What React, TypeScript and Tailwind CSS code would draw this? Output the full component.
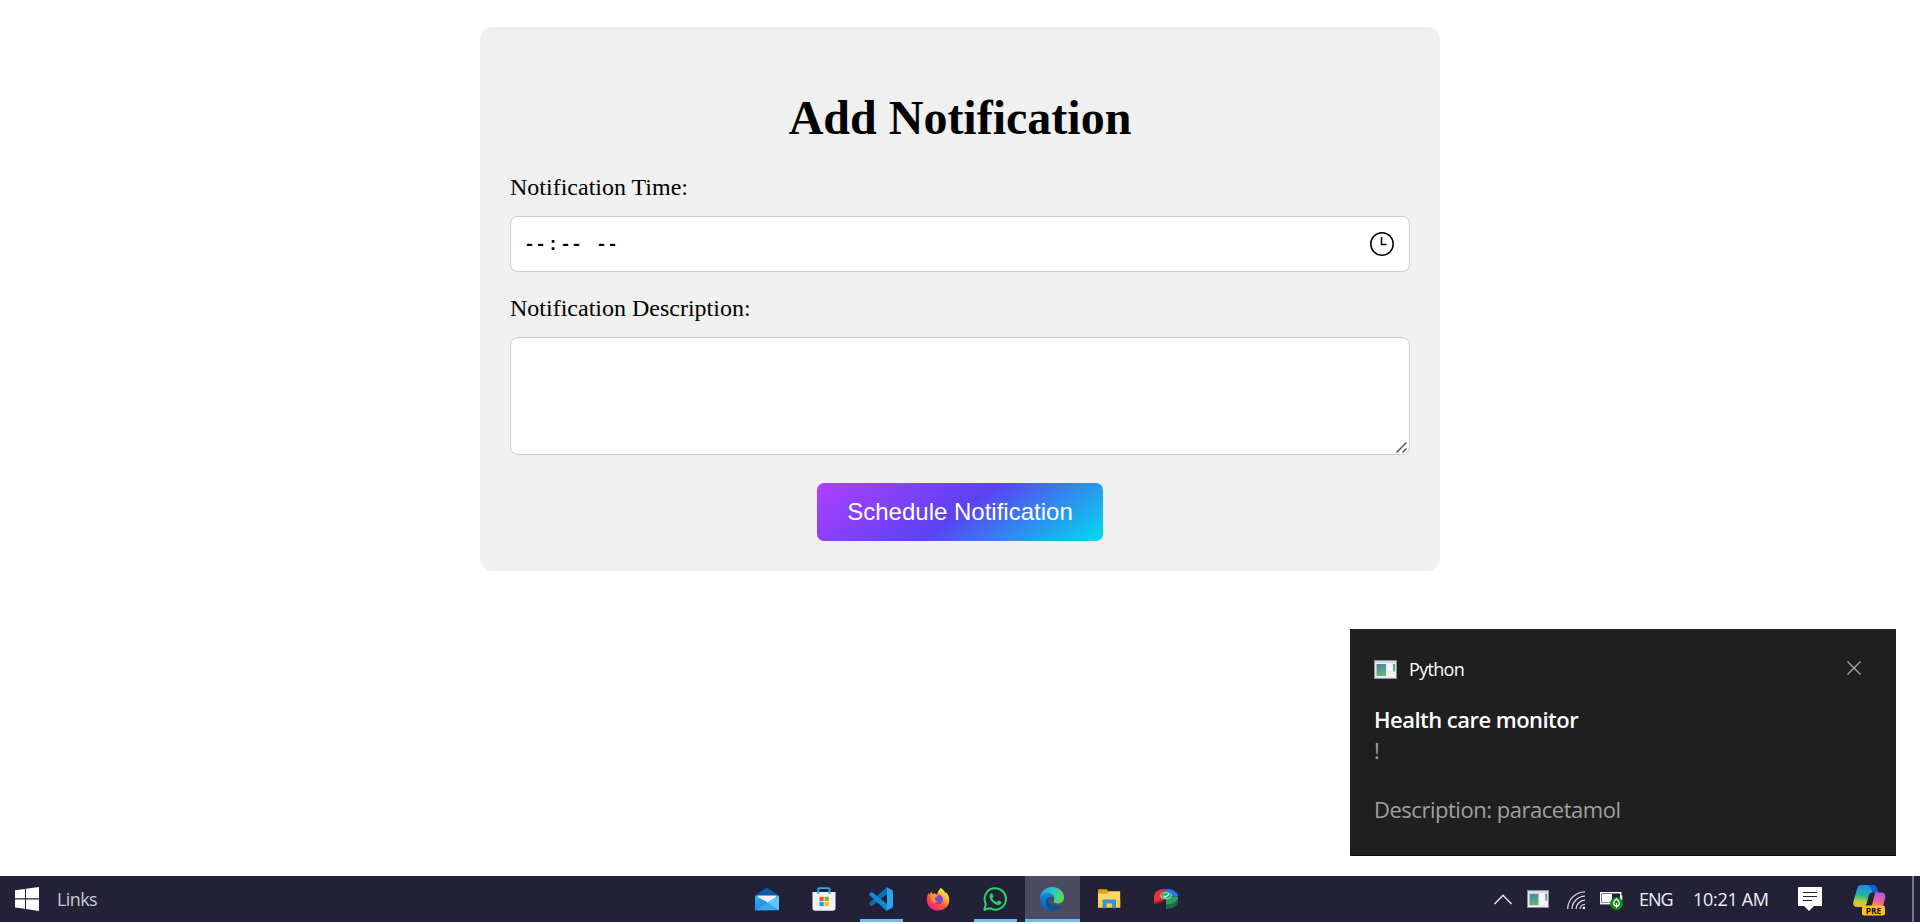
import type { ReactNode } from "react";

const UI = "font-['Open_Sans','Noto_Sans',sans-serif]";

function ClockIcon() {
  return (
    <svg width="24" height="24" viewBox="0 0 24 24" fill="none" stroke="#000" strokeWidth="1.5">
      <circle cx="12" cy="12" r="11.2" />
      <path d="M11.5 5v7.5h5" />
    </svg>
  );
}

function PythonIcon({ className }: { className: string }) {
  return (
    <svg viewBox="0 0 22 19" className={className} preserveAspectRatio="none">
      <defs>
        <linearGradient id="pyWin" x1="0" y1="0" x2="0.3" y2="1">
          <stop offset="0" stopColor="#4a7fa5" />
          <stop offset="1" stopColor="#66b37a" />
        </linearGradient>
      </defs>
      <rect x="0.5" y="0.5" width="21" height="18" fill="#e9ecee" stroke="#8b9296" />
      <rect x="1" y="1" width="20" height="2" fill="#d5dade" />
      <rect x="2.5" y="4" width="9" height="12" fill="url(#pyWin)" />
      <rect x="13" y="4" width="4.5" height="7" fill="#f8f8f8" />
      <rect x="13" y="12" width="7" height="4" fill="#f6f6f6" />
      <rect x="18.4" y="4" width="1.8" height="7.5" fill="url(#pyWin)" />
    </svg>
  );
}

function WindowsLogo() {
  return (
    <svg width="24" height="24" viewBox="0 0 24 24" fill="#fff">
      <path d="M0 3.3 10 2v9.3H0zM11 1.8 24 0v11.3H11zM0 12.4h10v9.4L0 20.5zM11 12.4h13V24l-13-1.9z" />
    </svg>
  );
}

function MailIcon() {
  return (
    <svg width="24" height="24" viewBox="0 0 24 24">
      <defs>
        <linearGradient id="mailBody" x1="0" y1="0" x2="0.4" y2="1">
          <stop offset="0" stopColor="#35b9f5" />
          <stop offset="1" stopColor="#1a86dd" />
        </linearGradient>
      </defs>
      <path d="M0 8.5 10.7 1.3a2.2 2.2 0 0 1 2.6 0L24 8.500V14H0z" fill="#0a5cab" />
      <path d="M2 8.500h20l-5 9H7z" fill="#f4f1f1" />
      <path d="M0 8.500 12 15v8.200H0z" fill="url(#mailBody)" />
      <path d="M0 23.200 24 8.500v14.700z" fill="#35a9ee" />
      <path d="M24 8.500 12 15.200 24 23.200z" fill="#58c8f6" />
    </svg>
  );
}

function StoreIcon() {
  return (
    <svg width="24" height="24" viewBox="0 0 24 24">
      <path d="M6.200 6.500V2.400a1.300 1.300 0 0 1 1.300-1.300h8.800a1.300 1.300 0 0 1 1.300 1.300v4.100" fill="none" stroke="#28b2ea" strokeWidth="1.900" />
      <path d="M.5 5h23v16a2.800 2.800 0 0 1-2.800 2.800H3.300A2.800 2.800 0 0 1 .5 21z" fill="#f1f0f2" />
      <path d="M6.200 5V7M17.600 5V7" stroke="#28b2ea" strokeWidth="1.900" />
      <rect x="7.500" y="9.800" width="4.200" height="4.200" fill="#f25022" />
      <rect x="12.600" y="9.800" width="4.200" height="4.200" fill="#7fba00" />
      <rect x="7.500" y="14.900" width="4.200" height="4.200" fill="#00a4ef" />
      <rect x="12.600" y="14.900" width="4.200" height="4.200" fill="#ffb900" />
    </svg>
  );
}

function VsCodeIcon() {
  return (
    <svg width="24" height="24" viewBox="0 0 24 24">
      <path d="M.3 15.900a1 1 0 0 0 0 1.400L2 18.700c.4.300.9.300 1.300 0L18 7V.3c-.4 0-.8.200-1.100.5z" fill="#0b6fb5" />
      <path d="M.3 8.100a1 1 0 0 1 0-1.400L2 5.300c.4-.3.900-.3 1.300 0L18 17v6.700c-.4 0-.8-.2-1.100-.5z" fill="#1489d1" />
      <path d="M17.400.3 23 2.900c.6.300 1 .9 1 1.500v15.200c0 .6-.4 1.200-1 1.500l-5.600 2.600c-.5.200-1 .1-1.400-.3.800.5 2 0 2-1V1.600c0-1-1.200-1.500-2-1 .4-.4.900-.5 1.400-.3z" fill="#28a4f0" />
    </svg>
  );
}

function FirefoxIcon() {
  return (
    <svg width="24" height="24" viewBox="0 0 24 24">
      <defs>
        <linearGradient id="ffBody" x1="0.850" y1="0.100" x2="0.250" y2="0.950">
          <stop offset="0" stopColor="#fff04a" />
          <stop offset="0.350" stopColor="#ffa82c" />
          <stop offset="0.650" stopColor="#ff5038" />
          <stop offset="1" stopColor="#f0208a" />
        </linearGradient>
      </defs>
      <path d="M14.600 1c3.700 2.200 4.400 4.200 4.900 6 .1-1 .1-1.500-.1-2.200 2.500 2.200 3.900 5.200 3.900 8.300C23.300 19.300 18.300 23.500 12 23.500S.8 18.800.8 12.900c0-3 .8-5.500 2.300-7.400L3.200 8l2.100-3.300L6.500 6.700c1.800-.4 3.300 0 4.400.8.9-2.400 2-4.500 3.700-6.500z" fill="url(#ffBody)" />
      <circle cx="12" cy="12.500" r="5" fill="#7a45d8" />
      <path d="M3.300 8.300c2.200-1.700 4.800-1.500 7-.2l1.800.2c-.4 1.300-1.800 1.900-3.100 2.200-.6 2.500.9 3.700 3 3.700-1.300 2.500-6.500 1.800-7-2.500-.1-1.300-.6-2.300-1.700-3.400z" fill="#ff9128" />
    </svg>
  );
}

function WhatsAppIcon() {
  return (
    <svg width="24" height="24" viewBox="0 0 24 24">
      <path d="M1.300 22.700 2.900 17A10.700 10.700 0 1 1 7 21.200z" fill="none" stroke="#2bd366" strokeWidth="2" strokeLinejoin="round" />
      <path d="M8.600 6.300c.4 0 .7.100.9.600l.9 2.100c.1.300 0 .6-.2.900l-.8 1c-.2.200-.2.400 0 .7 1 1.700 2.300 2.800 4 3.500.3.100.5.100.7-.1l1-1.200c.2-.3.500-.3.800-.2l2.200 1.100c.3.100.4.300.4.600-.1 1.700-1.600 2.700-3.100 2.700-4.100-.3-8.800-4.600-9-8.800.1-1.400 1-2.700 2.200-2.900z" fill="#2bd366" />
    </svg>
  );
}

function EdgeIcon() {
  return (
    <svg width="24" height="24" viewBox="0 0 24 24">
      <defs>
        <linearGradient id="edgeTop" x1="0" y1="0.300" x2="1" y2="0.500">
          <stop offset="0" stopColor="#1a9fe0" />
          <stop offset="0.500" stopColor="#2cc4cf" />
          <stop offset="1" stopColor="#5fdc50" />
        </linearGradient>
        <linearGradient id="edgeSide" x1="0" y1="0" x2="0" y2="1">
          <stop offset="0" stopColor="#1585dc" />
          <stop offset="1" stopColor="#0c63b8" />
        </linearGradient>
      </defs>
      <path d="M0 11C.6 4.500 5.600 0 12 0c7 0 12 5 12 10.500 0 3.600-2.700 6-6 6-2.800 0-4.600-1-4.600-2 0-.6 1-1.200 1-3C14.400 8.500 11.200 6.500 7.500 6.500 4 6.500 1.200 8.200 0 11z" fill="url(#edgeTop)" />
      <path d="M0 11.500C1 8.200 4 6.300 7.500 6.300c3.600 0 6.900 2.200 6.900 5.200-.8-1.300-1.700-1.800-2.700-1.800-2 0-3.500 2-3.500 4.800 0 4 3 6.800 6.800 8.700C6.800 25.600 0 20 0 11.500z" fill="url(#edgeSide)" />
      <path d="M8.200 14.500c0-2.400 1.200-4.200 2.700-4.700-3.300.3-5.200 3-5.200 6 0 4.500 3.800 8.200 7.500 8.200 3.800 0 7.400-2 9.200-5.200.3-.5-.1-.8-.6-.5-1.200.6-2.700 1-4.200 1-5 0-9.400-1.900-9.400-4.800z" fill="#0f4f97" />
    </svg>
  );
}

function ExplorerIcon() {
  return (
    <svg width="24" height="24" viewBox="0 0 24 24">
      <path d="M1 3.200c0-.6.400-1 1-1h7.500L12 4.800V9H1z" fill="#e5a000" />
      <path d="M1 6.500h9L12 4.200h11.200V20.500H1z" fill="#ffd760" />
      <path d="M1 13h22.200v7.500H1z" fill="#ffcb45" />
      <path d="M5.500 21.200v-7.400c0-.8.500-1.300 1.300-1.300h10.900c.8 0 1.300.5 1.300 1.300v7.400h-4v-4.700H9.500v4.700z" fill="#3b8fd8" />
    </svg>
  );
}

function PieIcon() {
  return (
    <svg width="24" height="24" viewBox="0 0 24 24">
      <path d="M0 9v8.500l8.500-2.500L12 12V8z" fill="#9c1f26" />
      <path d="M0 9.500C0 5 4.500 2 10.500 2L12 9.500 8 13 0 15z" fill="#e2363b" />
      <path d="M10.500 2C18 1.500 24 5 24 9.500V13l-12-3z" fill="#1d4fb5" />
      <path d="M10.500 2C18 1.500 24 5 24 9.500L12 9.500z" fill="#2b78ea" />
      <path d="M12 11v11c6.500 0 12-3 12-7.500V10z" fill="#14703e" />
      <path d="M12 10v7.500c6 0 11.500-3 12-7.500z" fill="#2f9b5c" />
      <ellipse cx="12" cy="8.700" rx="5.300" ry="3.200" fill="#18b35a" stroke="#bff0cf" strokeWidth="0.800" />
      <path d="m9.400 8.700 2 1.400 3.500-2.900" fill="none" stroke="#fff" strokeWidth="1.300" />
    </svg>
  );
}

function WifiIcon() {
  return (
    <svg width="19" height="19" viewBox="0 0 19 19" fill="none" stroke="#d9d9df" strokeWidth="1.300">
      <path d="M.7 18C.7 9 8 1 18 .8" />
      <path d="M5 18C5 11.500 10.500 5.500 18 5.200" />
      <path d="M9 18c0-4.500 4-8.500 9-8.800" />
      <path d="M13 18c0-2.300 2-4.500 5-4.700" />
      <rect x="15.800" y="15.800" width="2.200" height="2.200" fill="#fff" stroke="none" />
    </svg>
  );
}

function BatteryIcon() {
  return (
    <svg width="24" height="20" viewBox="0 0 24 20">
      <rect x="0.700" y="2.700" width="20" height="11" fill="none" stroke="#fff" strokeWidth="1.400" />
      <rect x="2" y="4" width="10" height="8.500" fill="#fff" />
      <rect x="21" y="5.500" width="1.300" height="5" fill="#fff" />
      <circle cx="16.500" cy="13.500" r="6.500" fill="#128a1c" />
      <path d="M16.500 18v-5M16.500 9c4 3 3.500 6.500 0 7.300-3.500-.8-4-4.300 0-7.300z" fill="none" stroke="#fff" strokeWidth="1.200" />
    </svg>
  );
}

function MessageIcon() {
  return (
    <svg width="24" height="24" viewBox="0 0 24 24">
      <path d="M0 0h24v19h-8l-5 5-5-5H0z" fill="#fff" />
      <path d="M5 5.500h14M5 9.500h14M5 13.500h9" stroke="#232138" strokeWidth="1.100" />
    </svg>
  );
}

function CopilotIcon() {
  return (
    <svg width="33" height="31" viewBox="0 0 33 31">
      <defs>
        <linearGradient id="cpLeft" x1="0.300" y1="0" x2="0.200" y2="1">
          <stop offset="0" stopColor="#1a8fe8" />
          <stop offset="0.450" stopColor="#22b5a0" />
          <stop offset="0.750" stopColor="#b5d334" />
          <stop offset="1" stopColor="#ffb52e" />
        </linearGradient>
        <linearGradient id="cpRight" x1="0.600" y1="0" x2="0.300" y2="1">
          <stop offset="0" stopColor="#a85cf0" />
          <stop offset="0.500" stopColor="#ea5fa0" />
          <stop offset="1" stopColor="#ff8a4a" />
        </linearGradient>
      </defs>
      <path d="M8.500 0H20c2 0 3 1 3.600 3l1.400 4.500h-5.500c-2 0-3 1-3.700 3L13.500 19c-.6 2-1.700 3-3.500 3H4.500C1 22-.5 19.500.5 16L4 4C4.800 1.500 6.200 0 8.500 0z" fill="url(#cpLeft)" />
      <path d="M14 0h6c2 0 3 1 3.600 3L25 7.500h-5.500c-.8-3-2-6.500-5.500-7.500z" fill="#1560d8" />
      <path d="M22 7.500h6.500c3 0 4.500 2.500 3.600 5.500L30 21.500H14.500l3-.5c1-.5 1.500-1.500 2-3z" fill="url(#cpRight)" />
      <path d="M19 7.500h3L18.500 20c-.4 1-1 1.500-2 1.500h-4z" fill="#222536" />
      <rect x="9" y="20.500" width="23" height="10" rx="2" fill="#ffc20e" />
      <text x="20.500" y="28.600" textAnchor="middle" fontSize="8.500" fontWeight="700" fontFamily="Open Sans" fill="#111">
        PRE
      </text>
    </svg>
  );
}

type Task = { name: string; icon: ReactNode; state: "idle" | "open" | "active" };

const tasks: Task[] = [
  { name: "mail", icon: <MailIcon />, state: "idle" },
  { name: "store", icon: <StoreIcon />, state: "idle" },
  { name: "vscode", icon: <VsCodeIcon />, state: "open" },
  { name: "firefox", icon: <FirefoxIcon />, state: "idle" },
  { name: "whatsapp", icon: <WhatsAppIcon />, state: "open" },
  { name: "edge", icon: <EdgeIcon />, state: "active" },
  { name: "explorer", icon: <ExplorerIcon />, state: "idle" },
  { name: "pie", icon: <PieIcon />, state: "idle" },
];

function TaskButton({ task }: { task: Task }) {
  return (
    <div className={`flex w-[55px] flex-col items-center ${task.state === "active" ? "bg-[#4d4b5f]" : ""}`}>
      <div className="flex h-[43px] items-center pr-[1px] pt-[3px]">{task.icon}</div>
      {task.state === "open" && <div className="h-[3px] w-[43px] bg-[#76b9ed]" />}
      {task.state === "active" && <div className="h-[3px] w-full bg-[#76b9ed]" />}
    </div>
  );
}

function Taskbar() {
  return (
    <footer className={`flex h-[46px] bg-[#232138] text-[18px] ${UI}`}>
      <div className="flex w-[740px] items-center pl-[15px]">
        <WindowsLogo />
        <span className="ml-[18px] pt-[1px] tracking-[-0.6px] text-[#c9c8cf]">Links</span>
      </div>
      <div className="flex gap-[2px]">
        {tasks.map((t) => (
          <TaskButton key={t.name} task={t} />
        ))}
      </div>
      <div className="ml-[300px] flex grow items-center text-[#f0f0f3]">
        <svg width="18" height="11" viewBox="0 0 18 11" fill="none" stroke="#e8e8ec" strokeWidth="1.400">
          <path d="M.5 10 9 1.200 17.500 10" />
        </svg>
        <PythonIcon className="ml-[15px] h-[18px] w-[22px]" />
        <div className="ml-[18px] pt-[2px]"><WifiIcon /></div>
        <div className="ml-[14px] pt-[2px]"><BatteryIcon /></div>
        <span className="ml-[15px] w-[34px] whitespace-nowrap pt-[1px] tracking-[-1px]">ENG</span>
        <span className="ml-[20px] w-[77px] whitespace-nowrap pt-[1px] tracking-[-0.3px]">10:21 AM</span>
        <div className="ml-[28px]"><MessageIcon /></div>
        <div className="ml-[31px] pt-[2px]"><CopilotIcon /></div>
      </div>
      <div className="mr-[6px] w-[2px] bg-[#77768a]" />
    </footer>
  );
}

function Toast() {
  return (
    <aside className={`absolute left-[1350px] top-[629px] flex h-[227px] w-[546px] flex-col border-b border-[#111] bg-[#1f1f1f] px-6 ${UI}`}>
      <div className="mt-[28px] flex h-6 items-center text-[18px] text-white">
        <PythonIcon className="h-[19px] w-[23px]" />
        <span className="ml-[12px] grow tracking-[-0.7px]">Python</span>
        <svg width="14" height="14" viewBox="0 0 14 14" className="mb-[2px] mr-[11px]" stroke="#a5a5a5" strokeWidth="1.400">
          <path d="M.5.5l13 13M13.500.5l-13 13" />
        </svg>
      </div>
      <div className="mt-[23px] text-[22px] leading-[30px] text-[#a0a0a0]">
        <p className="font-semibold tracking-[-0.530px] text-white">Health care monitor</p>
        <p className="pt-[1px]">!</p>
        <p className="mt-[29px] tracking-[-0.480px]">Description: paracetamol</p>
      </div>
    </aside>
  );
}

export default function App() {
  return (
    <div className="relative flex h-[924px] w-[1920px] flex-col overflow-hidden bg-white pb-[2px] pt-[27px]">
      <main className="flex grow flex-col items-center">
        <form className="flex h-[544px] w-[960px] flex-col rounded-[12px] bg-[#f0f0f0] px-[30px] font-['Liberation_Serif',serif] text-black">
          <h1 className="mt-[63px] text-center text-[48px] font-bold leading-[56px]">Add Notification</h1>
          <label className="mt-[27px] text-[24px] leading-[28px]">Notification Time:</label>
          <div className="mt-[15px] flex h-[56px] items-center rounded-[8px] border border-[#cccccc] bg-white pl-[12px] pr-[15px]">
            <div className="flex grow pt-[4px] font-['Liberation_Mono',monospace] text-[18.330px] font-bold leading-[26px]">
              <span className="px-[1px]">--</span>
              <span className="w-3 text-center">:</span>
              <span className="px-[1px]">--</span>
              <span className="ml-3 px-[1px]">--</span>
            </div>
            <ClockIcon />
          </div>
          <label className="mt-[22px] text-[24px] leading-[28px]">Notification Description:</label>
          <div className="relative mt-[15px] h-[118px]">
            <textarea className="block h-full w-full resize-none rounded-[8px] border border-[#cccccc] bg-white" />
            <svg width="11" height="11" viewBox="0 0 11 11" className="absolute bottom-[2px] right-[3px]" stroke="#555" strokeWidth="1.500">
              <path d="M.5 10.500l10-10M6.500 10.500l4-4" />
            </svg>
          </div>
          <button
            type="button"
            className="mt-[28px] h-[58px] w-[286px] self-center rounded-[7px] bg-[linear-gradient(144deg,#af40ff,#5b42f3_50%,#00ddeb)] font-['Liberation_Sans',sans-serif] text-[24px] text-white"
          >
            Schedule Notification
          </button>
        </form>
      </main>
      <Taskbar />
      <Toast />
    </div>
  );
}
